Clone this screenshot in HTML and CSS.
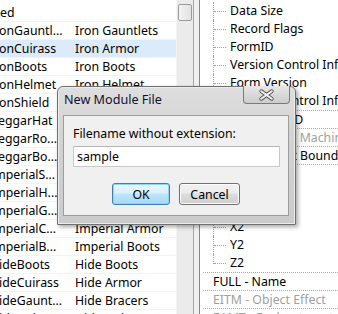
FILE: index.html
```html
<!DOCTYPE html>
<html lang="en">
<head>
  <meta charset="UTF-8" />
  <title>New Module File</title>
  <link rel="stylesheet" href="styles.css">
</head>
<body>

  <div class="app">
    <!-- Record list (scrolled a little to the right) -->
    <div class="list">
      <div class="rows">
        <div class="row"><span class="c1">Tied</span><span class="c2"></span></div>
        <div class="row"><span class="c1">IronGauntl...</span><span class="c2">Iron Gauntlets</span></div>
        <div class="row sel"><span class="c1">IronCuirass</span><span class="c2">Iron Armor</span></div>
        <div class="row"><span class="c1">IronBoots</span><span class="c2">Iron Boots</span></div>
        <div class="row"><span class="c1">IronHelmet</span><span class="c2">Iron Helmet</span></div>
        <div class="row"><span class="c1">IronShield</span><span class="c2">Iron Shield</span></div>
        <div class="row"><span class="c1">BeggarHat</span><span class="c2">Beggar Hat</span></div>
        <div class="row"><span class="c1">BeggarRo...</span><span class="c2">Beggar Robes</span></div>
        <div class="row"><span class="c1">BeggarBo...</span><span class="c2">Beggar Boots</span></div>
        <div class="row"><span class="c1">ImperialS...</span><span class="c2">Imperial Shield</span></div>
        <div class="row"><span class="c1">ImperialH...</span><span class="c2">Imperial Helmet</span></div>
        <div class="row"><span class="c1">ImperialG...</span><span class="c2">Imperial Bracers</span></div>
        <div class="row"><span class="c1">ImperialC...</span><span class="c2">Imperial Armor</span></div>
        <div class="row"><span class="c1">ImperialB...</span><span class="c2">Imperial Boots</span></div>
        <div class="row"><span class="c1">HideBoots</span><span class="c2">Hide Boots</span></div>
        <div class="row"><span class="c1">HideCuirass</span><span class="c2">Hide Armor</span></div>
        <div class="row"><span class="c1">HideGaunt...</span><span class="c2">Hide Bracers</span></div>
        <div class="row"><span class="c1">HideHelmet</span><span class="c2">Hide Helmet</span></div>
      </div>
    </div>
    <div class="vscroll"><div class="thumb"></div></div>
    <div class="splitter"></div>

    <!-- Record view tree -->
    <div class="tree">
      <div class="node child">Data Size</div>
      <div class="node child">Record Flags</div>
      <div class="node child">FormID</div>
      <div class="node child">Version Control Info 1</div>
      <div class="node child">Form Version</div>
      <div class="node child last">Version Control Info 2</div>
      <div class="node top">EDID - Editor ID</div>
      <div class="node top off">VMAD - Virtual Machine Adapter</div>
      <div class="node top">OBND - Object Bounds</div>
      <div class="node child">X1</div>
      <div class="node child">Y1</div>
      <div class="node child">Z1</div>
      <div class="node child">X2</div>
      <div class="node child">Y2</div>
      <div class="node child last">Z2</div>
      <div class="node top">FULL - Name</div>
      <div class="node top off">EITM - Object Effect</div>
      <div class="node top off">EAMT - Enchantment Amount</div>
    </div>
  </div>

  <!-- Dialog -->
  <div class="dialog">
    <div class="titlebar">
      <span class="title">New Module File</span>
      <button class="close">
        <svg width="47" height="18" viewBox="0 0 47 18">
          <path d="M18 5 L29 13 M29 5 L18 13" stroke="#5c5c5c" stroke-width="4" stroke-linecap="round"/>
          <path d="M18 5 L29 13 M29 5 L18 13" stroke="#f4f4f4" stroke-width="2" stroke-linecap="round"/>
        </svg>
      </button>
    </div>
    <div class="client">
      <label class="label" for="filename">Filename without extension:</label>
      <input class="field" id="filename" type="text" value="sample">
      <div class="buttons">
        <button class="btn btn-ok">OK</button>
        <button class="btn">Cancel</button>
      </div>
    </div>
  </div>

</body>
</html>
```

FILE: styles.css
```css
body {
  margin: 0;
  width: 338px;
  height: 314px;
  overflow: hidden;
  position: relative;
  background: #fff;
  color: #000;
  font-family: "Noto Sans", sans-serif;
  font-size: 12.3px;
}

.app {
  display: flex;
  height: 314px;
}

/* Left list */
.list {
  width: 176px;
  overflow: hidden;
}

.rows {
  margin-left: -10px;
  padding-top: 4px;
}

.row {
  display: flex;
  box-sizing: border-box;
  height: 18px;
  line-height: 17px;
  border-bottom: 1px solid #f3f3f3;
  white-space: nowrap;
}

.row.sel {
  background: #dcebfb;
}

.c1 {
  width: 78px;
  flex: none;
  overflow: hidden;
}

.c2 {
  padding-left: 7px;
}

.vscroll {
  width: 17px;
  flex: none;
  background: #ebebeb;
  border-left: 1px solid #f5f5f5;
  box-sizing: border-box;
}

.thumb {
  margin: 4px 1px 0 1px;
  height: 17px;
  box-sizing: border-box;
  border: 1px solid #9b9b9b;
  border-radius: 2px;
  background: linear-gradient(to right, #f4f4f4, #e1e1e1);
}

.splitter {
  width: 7px;
  flex: none;
  box-sizing: border-box;
  background: #f0f0f0;
  border-left: 1px solid #a7a7a7;
  border-right: 1px solid #85898f;
}

/* Right tree */
.tree {
  flex: 1;
  overflow: hidden;
  padding-top: 2px;
  white-space: nowrap;
}

.node {
  position: relative;
  box-sizing: border-box;
  height: 18px;
  line-height: 18px;
}

.node.child {
  padding-left: 30px;
}

.node.top {
  margin-left: 3px;
  padding-left: 10px;
  line-height: 17px;
  border-top: 1px dotted #a9a9a9;
}

.node.top + .node.child {
  border-top: 1px dotted #a9a9a9;
}

.node.off {
  color: #a0a0a0;
}

/* tree connectors */
.node.child::before {
  content: "";
  position: absolute;
  left: 14px;
  top: 9px;
  width: 12px;
  border-top: 1px dotted #a0a0a0;
}

.node.child::after {
  content: "";
  position: absolute;
  left: 13px;
  top: 0;
  bottom: 0;
  border-left: 1px dotted #a0a0a0;
}

.node.child.last::after {
  bottom: 8px;
}

/* Dialog */
.dialog {
  position: absolute;
  left: 57px;
  top: 86px;
  width: 239px;
  height: 139px;
  box-sizing: border-box;
  display: flex;
  flex-direction: column;
  padding: 0 6px 8px 5px;
  border: 1px solid #707070;
  border-radius: 6px 6px 0 0;
  background: linear-gradient(#dedede, #d2d2d2 40%, #cbcbcb);
  box-shadow: 2px 2px 4px rgba(0, 0, 0, 0.35), inset 0 0 0 1px #ececec;
}

.titlebar {
  display: flex;
  justify-content: space-between;
  align-items: flex-start;
  height: 28px;
}

.title {
  padding: 5px 0 0 1px;
  line-height: 16px;
  font-size: 12.6px;
  color: #101030;
}

.close {
  width: 47px;
  height: 18px;
  margin: -1px -1px 0 0;
  padding: 0;
  border: 1px solid #7a7a7a;
  border-top: none;
  border-radius: 0 0 4px 4px;
  background: linear-gradient(#e6e6e6, #cdcdcd);
  display: flex;
  align-items: center;
  justify-content: center;
}

.close svg {
  display: block;
}

.client {
  flex: 1;
  display: flex;
  flex-direction: column;
  background: #f0f0f0;
  border: 1px solid #9c9c9c;
  padding: 0 8px 0 9px;
}

.label {
  margin-top: 10px;
  line-height: 16px;
}

.field {
  margin-top: 4px;
  height: 21px;
  width: 207px;
  box-sizing: border-box;
  border: 1px solid #c9c9c9;
  border-top-color: #b5b5b5;
  padding: 0 3px;
  font-family: "Noto Sans", sans-serif;
  font-size: 12.3px;
  color: #000;
  background: #fff;
  outline: none;
}

.buttons {
  display: flex;
  justify-content: center;
  gap: 9px;
  margin-top: 16px;
  margin-left: -1px;
}

.btn {
  height: 22px;
  width: 61px;
  padding: 0;
  box-sizing: border-box;
  border: 1px solid #707070;
  border-radius: 3px;
  background: linear-gradient(#f2f2f2, #ebebeb 45%, #dddddd 50%, #cfcfcf);
  box-shadow: inset 0 0 0 1px #fcfcfc;
  font-family: "Noto Sans", sans-serif;
  font-size: 12.3px;
  color: #000;
}

.btn-ok {
  width: 58px;
  border-color: #3c7fb1;
  background: linear-gradient(#eaf6fd, #d9f0fc 45%, #bee6fd 50%, #a7d9f5);
  box-shadow: inset 0 0 0 1px #8fd6f5;
}
```
